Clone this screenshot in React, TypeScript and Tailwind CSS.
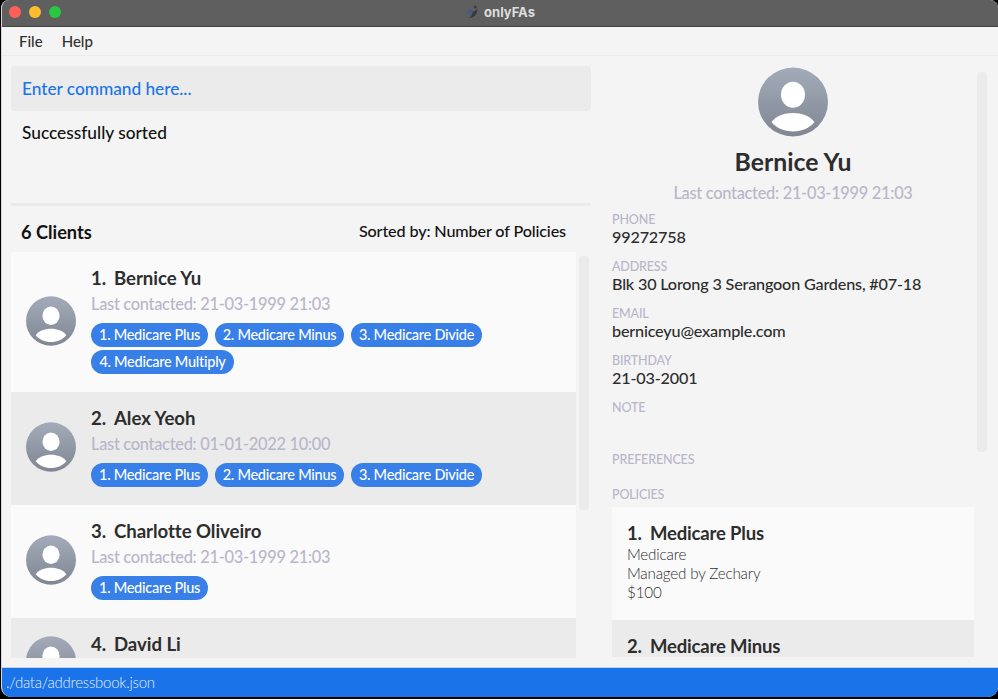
import React from "react";

function Avatar({ className }: { className: string }) {
  return (
    <svg viewBox="0 0 70 70" className={className}>
      <defs>
        <linearGradient id="avatarFill" x1="0" y1="0" x2="0" y2="1">
          <stop offset="0" stopColor="#a3abba" />
          <stop offset="1" stopColor="#808692" />
        </linearGradient>
      </defs>
      <ellipse cx="35" cy="35" rx="35" ry="34.5" fill="url(#avatarFill)" />
      <ellipse cx="35" cy="27.7" rx="12" ry="13" fill="#fff" />
      <path d="M13.500 55C18 49 26 46 35 46s17 3 21.500 9C51.500 61 44 64.500 35 64.500S18.500 61 13.500 55Z" fill="#fff" />
    </svg>
  );
}

function AppLogo() {
  return (
    <svg viewBox="0 0 14 14" className="h-[14px] w-[14px]">
      <circle cx="10.200" cy="2" r="1.500" fill="#3b3c3f" />
      <path d="M12.500 3.500C12.300 9 10 12.800 3.500 13c3-1.500 4-3.500 4.200-6.500C9 6.800 11 5.500 12.500 3.500Z" fill="#38393c" />
      <path d="M4.500 2.500 7.300 5.500c0 3-.8 5-3.300 6.500 1-2 .5-3.500-1-4.500L0 6.500l3 .2Z" fill="#465a86" />
    </svg>
  );
}

type Client = { name: string; date?: string; tags: string[]; height: string };

const clients: Client[] = [
  { name: "Bernice Yu", date: "21-03-1999 21:03", tags: ["Medicare Plus", "Medicare Minus", "Medicare Divide", "Medicare Multiply"], height: "h-[140px]" },
  { name: "Alex Yeoh", date: "01-01-2022 10:00", tags: ["Medicare Plus", "Medicare Minus", "Medicare Divide"], height: "h-[113px]" },
  { name: "Charlotte Oliveiro", date: "21-03-1999 21:03", tags: ["Medicare Plus"], height: "h-[113px]" },
  { name: "David Li", tags: [], height: "h-[89px]" },
];

const tagWidths = ["w-[117px]", "w-[129px]", "w-[131px]", "w-[143px]"];

const fields = [
  ["PHONE", "99272758"],
  ["ADDRESS", "Blk 30 Lorong 3 Serangoon Gardens, #07-18"],
  ["EMAIL", "berniceyu@example.com"],
  ["BIRTHDAY", "21-03-2001"],
];

const policies = [
  { name: "Medicare Plus", details: ["Medicare", "Managed by Zechary", "$100"] },
  { name: "Medicare Minus", details: [] },
];

function Label({ children }: { children: string }) {
  return <div className="text-[12.500px] leading-[16px] font-medium tracking-[-0.15px] whitespace-nowrap text-[#b9b6ca]">{children}</div>;
}

export default function App() {
  return (
    <div className="h-[699px] w-[998px] overflow-hidden bg-black pb-[2px] pl-px font-['Lato',sans-serif] text-[#2d2d2d] [font-variant-ligatures:none]">
      <div className="flex h-[697px] flex-col overflow-hidden rounded-t-[8px] rounded-b-[10px] border-l border-[#d8d8d8] bg-[#f4f4f4]">
        <header className="grid h-[27px] shrink-0 grid-cols-[1fr_auto_1fr] items-center border-b border-[#414141] bg-[#5f5f5f] pb-[2px]">
          <div className="flex gap-2 pl-[7px]">
            <span className="h-3 w-3 rounded-full bg-[#ff5f57]" />
            <span className="h-3 w-3 rounded-full bg-[#febc2e]" />
            <span className="h-3 w-3 rounded-full bg-[#28c840]" />
          </div>
          <div className="flex items-center gap-[5px]">
            <AppLogo />
            <span className="font-['Inter',sans-serif] text-[13px] leading-[18px] font-bold text-[#dedede]">onlyFAs</span>
          </div>
        </header>
        <nav className="flex h-[29px] shrink-0 items-center gap-[19px] border-b border-[#ebebeb] pl-[17px] text-[15px] font-medium text-[#303030]">
          <span>File</span>
          <span>Help</span>
        </nav>

        <main className="flex h-[611px] shrink-0 overflow-hidden pl-[9px]">
          <section className="flex w-[580px] shrink-0 flex-col pt-[10px]">
            <div className="flex h-[45px] shrink-0 items-center rounded-[4px] bg-[#ebebeb] pl-[11px] text-[17.300px] font-medium tracking-[-0.03px] text-[#1a73e8]">
              Enter command here...
            </div>
            <div className="h-[92px] shrink-0 pt-[11px] pl-[11px] text-[17.300px] leading-[22px] font-medium text-[#111]">Successfully sorted</div>
            <div className="h-[3px] shrink-0 bg-[#ebebeb]" />
            <div className="flex h-[46px] shrink-0 items-center justify-between pt-[6px] pr-[25px] pl-[10px] text-[#111]">
              <span className="text-[18.200px] leading-[22px] font-bold">6 Clients</span>
              <span className="pb-[2px] text-[16.200px] leading-[22px] font-medium tracking-[-0.14px]">Sorted by: Number of Policies</span>
            </div>
            <div className="flex h-[406px] overflow-hidden">
              <div className="w-[565px] shrink-0">
                {clients.map((c, i) => (
                  <div key={c.name} className={`flex ${c.height} ${i % 2 ? "bg-[#ebebeb]" : "bg-[#fafafa]"}`}>
                    <div className={`flex w-[80px] shrink-0 items-center pl-[15px] ${i ? "pb-[4px]" : "pb-[2px]"}`}>
                      <Avatar className="h-[50px] w-[50px]" />
                    </div>
                    <div className="pt-[15px]">
                      <div className="flex text-[18.600px] leading-[22px] font-bold tracking-[-0.05px] whitespace-nowrap">
                        <span className="w-[23px]">{i + 1}.</span>
                        <span>{c.name}</span>
                      </div>
                      {c.date && (
                        <div className="mt-[4px] text-[16.400px] leading-[21px] font-medium tracking-[-0.29px] whitespace-nowrap text-[#b9b6ca]">Last contacted: {c.date}</div>
                      )}
                      {c.tags.length > 0 && (
                        <div className="mt-[9px] flex w-[420px] flex-wrap gap-x-[7px] gap-y-[3px]">
                          {c.tags.map((t, n) => (
                            <span key={t} className={`${tagWidths[n]} flex h-[24px] justify-center rounded-full bg-[#3880e8] text-[14.500px] leading-[24px] font-medium tracking-[-0.27px] whitespace-nowrap text-white`}>
                              {n + 1}. {t}
                            </span>
                          ))}
                        </div>
                      )}
                    </div>
                  </div>
                ))}
              </div>
              <div className="mt-1 ml-[3px] h-[254px] w-[10px] rounded-[4px] bg-[#ebebeb]" />
            </div>
          </section>

          <aside className="ml-[21px] flex h-[601px] w-[362px] shrink-0 flex-col overflow-hidden">
            <div className="flex h-[156px] shrink-0 flex-col items-center pt-[11px]">
              <Avatar className="h-[70px] w-[70px] shrink-0" />
              <div className="mt-[10px] text-[24.800px] leading-[30px] font-bold">Bernice Yu</div>
              <div className="mt-[6px] text-[16.400px] leading-[20px] font-medium tracking-[-0.29px] text-[#b9b6ca]">Last contacted: 21-03-1999 21:03</div>
            </div>
            {fields.map(([label, value]) => (
              <div key={label} className="h-[47px] shrink-0">
                <Label>{label}</Label>
                <div className="-mt-px text-[16.200px] leading-[20px] font-medium tracking-[-0.18px] whitespace-nowrap">{value}</div>
              </div>
            ))}
            <div className="h-[52px] shrink-0"><Label>NOTE</Label></div>
            <div className="h-[35px] shrink-0"><Label>PREFERENCES</Label></div>
            <div className="h-[20px] shrink-0"><Label>POLICIES</Label></div>
            <div className="shrink-0">
              {policies.map((p, i) => (
                <div key={p.name} className={`h-[113px] pt-[15px] pl-[15px] ${i ? "bg-[#ebebeb]" : "bg-[#fafafa]"}`}>
                  <div className="flex text-[18.500px] leading-[22px] font-bold tracking-[-0.18px]">
                    <span className="w-[23px]">{i + 1}.</span>
                    <span>{p.name}</span>
                  </div>
                  <div className="mt-px text-[15.200px] leading-[19px] font-light tracking-[-0.18px]">
                    {p.details.map((d) => (
                      <div key={d}>{d}</div>
                    ))}
                  </div>
                </div>
              ))}
            </div>
          </aside>
          <div className="mt-[16px] ml-[3px] h-[380px] w-[10px] rounded-[4px] bg-[#ebebeb]" />
        </main>

        <footer className="flex h-[30px] shrink-0 items-center border-t border-[#c9d5e5] bg-[#1a73e8] pl-[4px] text-[15px] font-light tracking-[-0.24px] text-[#e4edfb]">
          ./data/addressbook.json
        </footer>
      </div>
    </div>
  );
}
